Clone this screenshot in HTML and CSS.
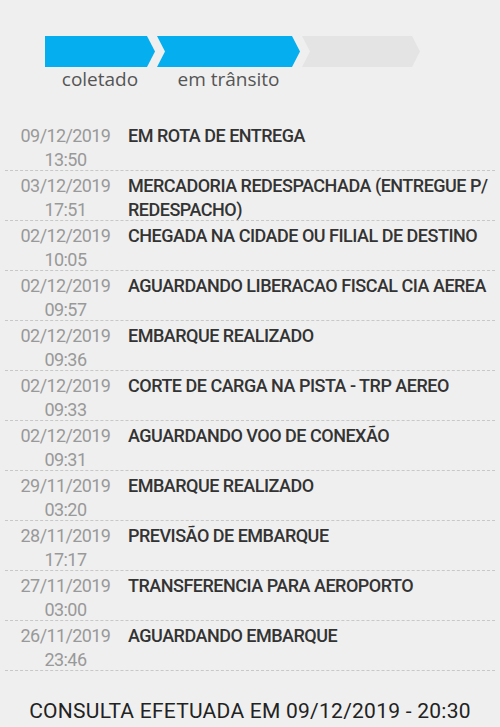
FILE: index.html
```html
<!DOCTYPE html>
<html>
  <head>
    <meta charset="UTF-8">
    <title>Rastreamento</title>
    <link rel="stylesheet" href="styles.css">
  </head>
  <body>
    <div id="tracking">
      <div class="steps">
        <div class="step first done">
          <span class="bar"></span>
          <span class="label">coletado</span>
        </div>
        <div class="step done wide">
          <span class="bar"></span>
          <span class="label">em trânsito</span>
        </div>
        <div class="step last">
          <span class="bar"></span>
          <span class="label"></span>
        </div>
      </div>

      <div class="events">
        <div class="event">
          <div class="when"><span class="date">09/12/2019</span><span class="time">13:50</span></div>
          <div class="what">EM ROTA DE ENTREGA</div>
        </div>
        <div class="event">
          <div class="when"><span class="date">03/12/2019</span><span class="time">17:51</span></div>
          <div class="what">MERCADORIA REDESPACHADA (ENTREGUE P/ REDESPACHO)</div>
        </div>
        <div class="event">
          <div class="when"><span class="date">02/12/2019</span><span class="time">10:05</span></div>
          <div class="what">CHEGADA NA CIDADE OU FILIAL DE DESTINO</div>
        </div>
        <div class="event">
          <div class="when"><span class="date">02/12/2019</span><span class="time">09:57</span></div>
          <div class="what">AGUARDANDO LIBERACAO FISCAL CIA AEREA</div>
        </div>
        <div class="event">
          <div class="when"><span class="date">02/12/2019</span><span class="time">09:36</span></div>
          <div class="what">EMBARQUE REALIZADO</div>
        </div>
        <div class="event">
          <div class="when"><span class="date">02/12/2019</span><span class="time">09:33</span></div>
          <div class="what">CORTE DE CARGA NA PISTA - TRP AEREO</div>
        </div>
        <div class="event">
          <div class="when"><span class="date">02/12/2019</span><span class="time">09:31</span></div>
          <div class="what">AGUARDANDO VOO DE CONEXÃO</div>
        </div>
        <div class="event">
          <div class="when"><span class="date">29/11/2019</span><span class="time">03:20</span></div>
          <div class="what">EMBARQUE REALIZADO</div>
        </div>
        <div class="event">
          <div class="when"><span class="date">28/11/2019</span><span class="time">17:17</span></div>
          <div class="what">PREVISÃO DE EMBARQUE</div>
        </div>
        <div class="event">
          <div class="when"><span class="date">27/11/2019</span><span class="time">03:00</span></div>
          <div class="what">TRANSFERENCIA PARA AEROPORTO</div>
        </div>
        <div class="event">
          <div class="when"><span class="date">26/11/2019</span><span class="time">23:46</span></div>
          <div class="what">AGUARDANDO EMBARQUE</div>
        </div>
      </div>

      <p class="consulted">CONSULTA EFETUADA EM 09/12/2019 - 20:30</p>
    </div>
  </body>
</html>
```

FILE: styles.css
```css
body {
  margin: 0;
  background-color: #efefef;
  font-family: "Roboto", "DejaVu Sans", sans-serif;
}
#tracking {
  padding: 36px 5px 0 5px;
}

/* progress steps */
.steps {
  display: flex;
  gap: 2px;
  margin-left: 40px;
}
.step {
  display: flex;
  flex-direction: column;
  align-items: center;
  width: 110px;
}
.step.wide {
  width: 143px;
}
.step.last {
  width: 118px;
}
.step .bar {
  display: block;
  width: 100%;
  height: 31px;
  background-color: #e4e4e4;
  clip-path: polygon(0 0, calc(100% - 8px) 0, 100% 50%, calc(100% - 8px) 100%, 0 100%, 8px 50%);
}
.step.first .bar {
  clip-path: polygon(0 0, calc(100% - 8px) 0, 100% 50%, calc(100% - 8px) 100%, 0 100%);
}
.step.done .bar {
  background-color: #04aeef;
}
.step .label {
  font-family: "Open Sans", sans-serif;
  font-size: 19px;
  color: #555;
  line-height: 24px;
  height: 24px;
}

/* events */
.events {
  margin-top: 30px;
}
.event {
  display: flex;
  height: 50px;
  box-sizing: border-box;
  border-bottom: 1px dashed #c8c8c8;
  padding-top: 3px;
}
.when {
  display: flex;
  flex-direction: column;
  align-items: center;
  width: 97px;
  padding-left: 12px;
  flex-shrink: 0;
  font-size: 18px;
  letter-spacing: -0.6px;
  line-height: 24px;
  color: #999;
}
.what {
  margin-left: 14px;
  font-size: 18px;
  font-weight: 500;
  letter-spacing: -0.5px;
  line-height: 24px;
  color: #333;
}

.consulted {
  margin: 28px 0 0 0;
  text-align: center;
  font-size: 21px;
  letter-spacing: 0.25px;
  color: #222;
}
```
